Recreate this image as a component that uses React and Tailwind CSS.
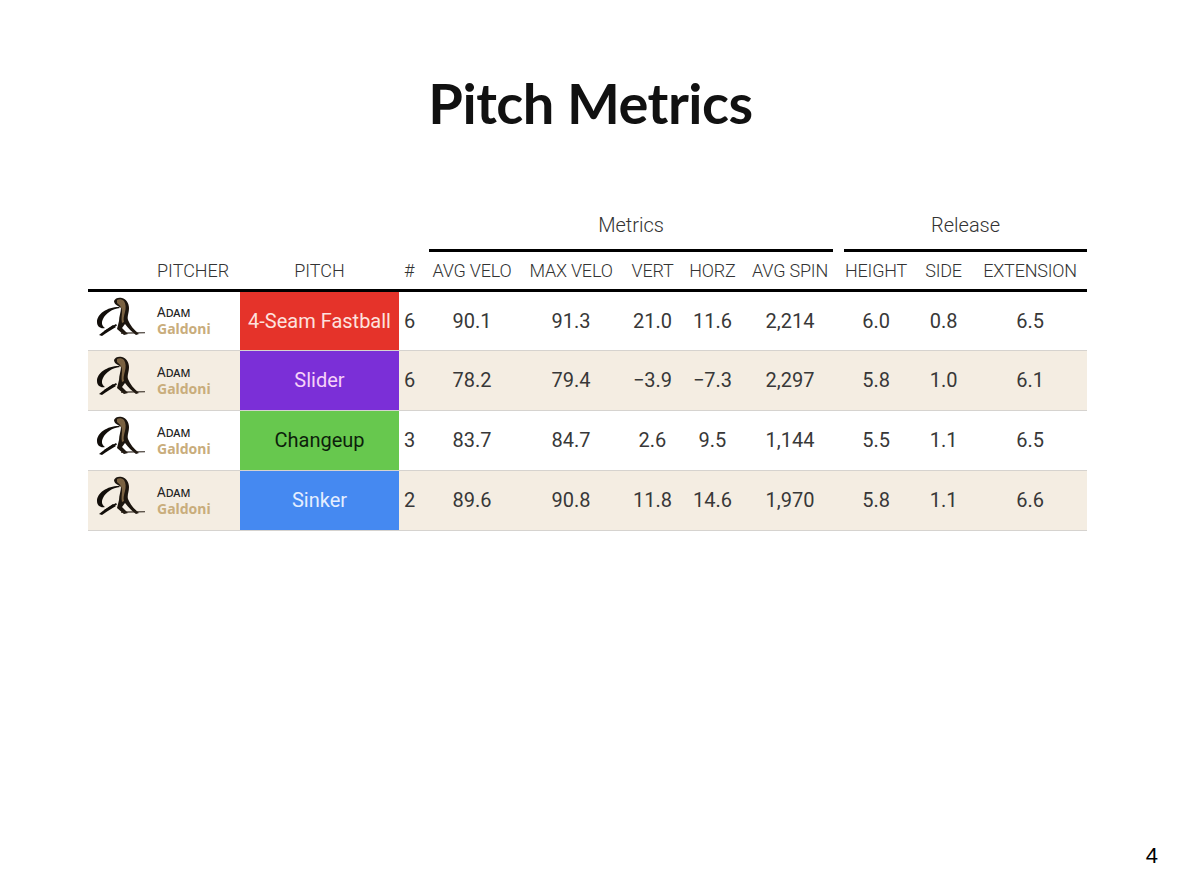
import React from "react";

const rows = [
  { pitch: "4-Seam Fastball", bg: "bg-[#e5332a]", fg: "text-[#fde2de]", n: 6, v: ["90.1", "91.3", "21.0", "11.6", "2,214", "6.0", "0.8", "6.5"], row: "bg-white" },
  { pitch: "Slider", bg: "bg-[#7b2fd7]", fg: "text-[#f6d2f8]", n: 6, v: ["78.2", "79.4", "\u22123.9", "\u22127.3", "2,297", "5.8", "1.0", "6.1"], row: "bg-[#f4ede2]" },
  { pitch: "Changeup", bg: "bg-[#67c84e]", fg: "text-[#0d1f0b]", n: 3, v: ["83.7", "84.7", "2.6", "9.5", "1,144", "5.5", "1.1", "6.5"], row: "bg-white" },
  { pitch: "Sinker", bg: "bg-[#4589f1]", fg: "text-[#e4eeff]", n: 2, v: ["89.6", "90.8", "11.8", "14.6", "1,970", "5.8", "1.1", "6.6"], row: "bg-[#f4ede2]" },
];

const widths = ["w-[96px]", "w-[102px]", "w-[61px]", "w-[59px]", "w-[96px]", "w-[76px]", "w-[59px]", "w-[114px]"];
const heads = ["AVG VELO", "MAX VELO", "VERT", "HORZ", "AVG SPIN", "HEIGHT", "SIDE", "EXTENSION"];

function Logo() {
  return (
    <svg width="56" height="54" viewBox="0 0 56 54" className="block">
      {/* crescent swoosh */}
      <path d="M27 13 C15 13 5 20 5 28 C5 33 9 35 13 34 C10 32 9 29 11 25 C14 19 20 15 28 14 Z" fill="#120e0a" />
      {/* figure: head + bent body */}
      <path d="M22 7 C23 4 27 3 30 4 C34 5 37 9 37 14 C37 19 35 22 36 26 C38 31 42 36 47 40 L44 41 C40 38 36 34 33 30 L30 34 C32 36 34 38 36 40 L32 41 L25 35 L27 27 C27 22 29 18 29 14 C27 12 22 11 22 7 Z" fill="#1c150e" />
      <path d="M25 6 C27 5 30 5 32 7 C34 10 34 14 33 18 C32 22 31 25 32 28 L30 29 C29 25 30 21 30 17 C30 13 27 11 25 9 Z" fill="#7a6242" />
      {/* left leg / foot black stroke */}
      <path d="M7 41 C11 38 16 34 21 31 L24 33 C19 36 14 39 10 42 Z" fill="#120e0a" />
      <path d="M12 37 L24 30 L25 31.5 L13 38.5 Z" fill="#120e0a" />
      {/* thin line */}
      <path d="M29 38.6 L53 38.2 L53 39.2 L29 39.8 Z" fill="#2a2118" />
    </svg>
  );
}

export default function App() {
  return (
    <div className="w-[1181px] h-[882px] bg-white relative flex flex-col font-['Roboto',sans-serif] text-[#333]">
      <h1 className="text-center font-['Lato',sans-serif] font-bold text-[56px] leading-none text-[#111] mt-[75px] tracking-[-0.5px]">
        Pitch Metrics
      </h1>
      <table className="ml-[88px] mt-[70px] w-[999px] border-collapse table-fixed">
        <colgroup>
          <col className="w-[67px]" />
          <col className="w-[85px]" />
          <col className="w-[159px]" />
          <col className="w-[25px]" />
          {widths.map((w, i) => (
            <col key={i} className={w} />
          ))}
        </colgroup>
        <thead>
          <tr className="h-[51px]">
            <th colSpan={4}></th>
            <th colSpan={5} className="px-[5px] align-bottom font-normal">
              <div className="text-[20px] leading-none pb-[14px] text-[#333] font-light">Metrics</div>
              <div className="h-[3px] bg-black"></div>
            </th>
            <th colSpan={3} className="pl-[6px] align-bottom font-normal">
              <div className="text-[20px] leading-none pb-[14px] text-[#333] font-light">Release</div>
              <div className="h-[3px] bg-black"></div>
            </th>
          </tr>
          <tr className="h-[38px] border-b-[3px] border-black text-[18px] font-light text-[#333]">
            <th></th>
            <th className="text-left pl-[2px] font-light">PITCHER</th>
            <th className="font-light">PITCH</th>
            <th className="text-left pl-[5px] font-light">#</th>
            {heads.map((h) => (
              <th key={h} className="font-light whitespace-nowrap tracking-[-0.2px]">{h}</th>
            ))}
          </tr>
        </thead>
        <tbody>
          {rows.map((r, i) => (
            <tr key={i} className={`h-[60px] border-b border-[#d6d3cf] ${r.row}`}>
              <td className="pl-[4px] align-middle">
                <Logo />
              </td>
              <td className="pl-[2px] align-middle">
                <div className="text-[13.5px] leading-[16px] text-[#222] [font-variant-caps:small-caps] font-['Noto_Sans',sans-serif]">Adam</div>
                <div className="text-[14px] leading-[17px] font-bold text-[#c9ad7c] font-['Noto_Sans',sans-serif]">Galdoni</div>
              </td>
              <td className={`${r.bg} ${r.fg} text-center text-[20px] whitespace-nowrap`}>{r.pitch}</td>
              <td className="pl-[5px] text-[20px] text-[#383838]">{r.n}</td>
              {r.v.map((v, j) => (
                <td key={j} className="text-center text-[20px] text-[#383838]">{v}</td>
              ))}
            </tr>
          ))}
        </tbody>
      </table>
      <div className="absolute right-[23px] bottom-[10px] text-[22px] font-['Liberation_Sans',sans-serif] text-black">4</div>
    </div>
  );
}
